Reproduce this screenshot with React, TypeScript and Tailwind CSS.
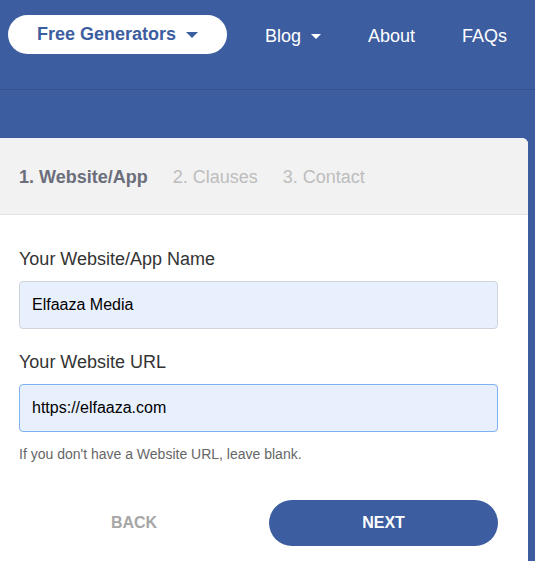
export default function App() {
  return (
    <div
      className="h-[561px] w-[535px] overflow-hidden bg-[#3c5d9f]"
      style={{ fontFamily: '"Liberation Sans", Arial, sans-serif' }}
    >
      <header className="flex h-[90px] items-start border-b border-[#34528f]">
        <nav className="flex w-full items-center pt-[15px]">
          <button className="ml-[8px] flex h-[39px] w-[219px] items-center justify-center gap-[10px] rounded-full bg-white text-[18px] font-bold text-[#3c5d9f]">
            Free Generators
            <span className="mt-[1px] h-0 w-0 border-x-[6px] border-t-[6px] border-x-transparent border-t-[#3c5d9f]" />
          </button>
          <a className="ml-[38px] flex items-center gap-[10px] pt-[3px] text-[18px] text-white">
            Blog
            <span className="h-0 w-0 border-x-[5px] border-t-[5px] border-x-transparent border-t-white" />
          </a>
          <a className="ml-[47px] pt-[3px] text-[18px] text-white">About</a>
          <a className="ml-[47px] pt-[3px] text-[18px] text-white">FAQs</a>
        </nav>
      </header>

      <main className="pt-[48px]">
        <section className="w-[528px] overflow-hidden rounded-tr-[6px] bg-white">
          <div className="flex h-[77px] items-center gap-[25px] border-b border-[#e3e3e3] bg-[#f2f2f2] pt-[2px] pl-[19px] text-[18px]">
            <span className="font-bold text-[#6b6e7b]">1. Website/App</span>
            <span className="text-[#bdbdbd]">2. Clauses</span>
            <span className="text-[#bdbdbd]">3. Contact</span>
          </div>

          <div className="px-[19px] pt-[32px] pb-[20px]">
            <label className="block text-[18px] leading-[24px] text-[#333]">Your Website/App Name</label>
            <div className="mt-[10px] flex h-[48px] w-[479px] items-center rounded-[4px] border border-[#cfd3da] bg-[#e8f0fe] px-[12px] text-[16px] text-black">
              Elfaaza Media
            </div>

            <label className="mt-[21px] block text-[18px] leading-[24px] text-[#333]">Your Website URL</label>
            <div className="mt-[10px] flex h-[48px] w-[479px] items-center rounded-[4px] border border-[#7fb0f0] bg-[#e8f0fe] px-[12px] text-[16px] text-black">
              https://elfaaza.com
            </div>
            <p className="mt-[12px] text-[14px] leading-[20px] text-[#666]">
              If you don't have a Website URL, leave blank.
            </p>

            <div className="mt-[36px] flex items-center">
              <button className="w-[230px] text-[16px] font-bold text-[#a6a6a6]">BACK</button>
              <button className="ml-[20px] h-[46px] w-[229px] rounded-full bg-[#3c5d9f] text-[16px] font-bold text-white">
                NEXT
              </button>
            </div>
          </div>
        </section>
      </main>
    </div>
  );
}
